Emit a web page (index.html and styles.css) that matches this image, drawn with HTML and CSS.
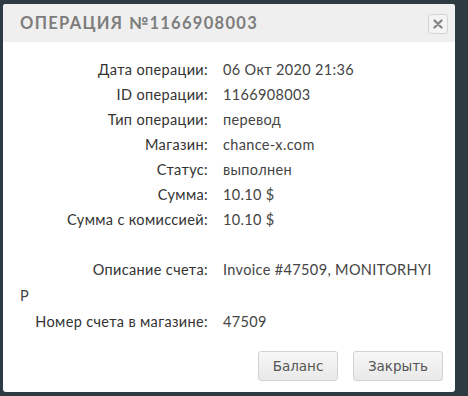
FILE: index.html
```html
<!DOCTYPE html>
<html lang="ru">
<head>
<meta charset="utf-8">
<title>Операция</title>
<link rel="stylesheet" href="styles.css">
</head>
<body>
<div class="dialog">
  <div class="header">
    <div class="title">Операция №1166908003</div>
    <button class="close" aria-label="Закрыть">
      <svg width="10" height="10" viewBox="0 0 10 10"><path d="M1.5 1.5 L8.5 8.5 M8.5 1.5 L1.5 8.5" stroke="#888" stroke-width="2.4" stroke-linecap="round"/></svg>
    </button>
  </div>
  <div class="content">
    <div class="row"><span class="label">Дата операции:</span>06 Окт 2020 21:36</div>
    <div class="row"><span class="label">ID операции:</span>1166908003</div>
    <div class="row"><span class="label">Тип операции:</span>перевод</div>
    <div class="row"><span class="label">Магазин:</span>chance-x.com</div>
    <div class="row"><span class="label">Статус:</span>выполнен</div>
    <div class="row"><span class="label">Сумма:</span>10.10 $</div>
    <div class="row"><span class="label">Сумма с комиссией:</span>10.10 $</div>
    <div class="row empty"></div>
    <div class="row wrap"><span class="label">Описание счета:</span>Invoice #47509, MONITORHYIP</div>
    <div class="row"><span class="label">Номер счета в магазине:</span>47509</div>
  </div>
  <div class="footer">
    <button class="btn">Баланс</button>
    <button class="btn">Закрыть</button>
  </div>
</div>
</body>
</html>
```
FILE: styles.css
```css
html, body {
  margin: 0;
  padding: 0;
  background: #2d3a41;
}
body {
  width: 468px;
  height: 396px;
  overflow: hidden;
}
.dialog {
  margin: 4px 0 0 3px;
  width: 452px;
  height: 388px;
  background: #fff;
  border-radius: 3px;
  display: flex;
  flex-direction: column;
  overflow: hidden;
}
.header {
  height: 38px;
  flex: none;
  background: #efefef;
  display: flex;
  align-items: center;
  justify-content: space-between;
  padding: 0 7px 0 17px;
}
.title {
  font-family: "Lato", "Noto Sans", sans-serif;
  font-weight: 700;
  font-size: 16.5px;
  letter-spacing: 1.3px;
  color: #7d7d7d;
  text-transform: uppercase;
}
.close {
  width: 20px;
  height: 20px;
  padding: 0;
  border: 1px solid #d4d4d4;
  border-radius: 3px;
  background: #f4f4f4;
  display: flex;
  align-items: center;
  justify-content: center;
  margin-top: 1px;
}
.content {
  padding: 15px 17px 0 17px;
  font-family: "Lato", "Noto Sans", sans-serif;
  font-size: 14.5px;
  letter-spacing: 0.35px;
  color: #444;
}
.row {
  line-height: 25px;
  min-height: 25px;
  word-break: break-all;
}
.wrap {
  line-height: 26px;
}
.label {
  display: inline-block;
  width: 188px;
  margin-right: 15px;
  text-align: right;
  color: #333;
  word-break: normal;
}
.footer {
  margin-top: auto;
  display: flex;
  justify-content: flex-end;
  gap: 15px;
  padding: 0 12px 11px 0;
}
.btn {
  height: 30px;
  padding: 0 10px;
  font-family: "DejaVu Sans", "Verdana", sans-serif;
  font-size: 13.5px;
  color: #555;
  border: 1px solid #d2d2d2;
  border-radius: 3px;
  background: linear-gradient(#f7f7f7, #e9e9e9);
}
.btn:first-child { width: 80px; }
.btn:last-child { width: 90px; }
```
